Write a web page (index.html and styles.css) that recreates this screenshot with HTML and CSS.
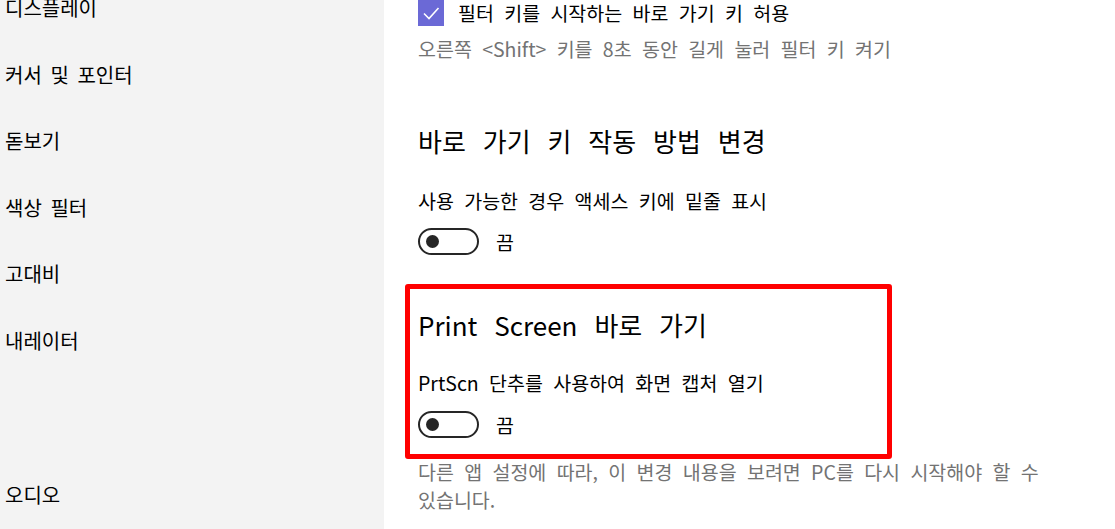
FILE: index.html
```html
<!DOCTYPE html>
<html lang="ko">
<head>
<meta charset="utf-8">
<link rel="stylesheet" href="styles.css">
</head>
<body>
<div class="app">
  <nav class="sidebar">
    <ul class="nav">
      <li class="nav-item">디스플레이</li>
      <li class="nav-item">커서 및 포인터</li>
      <li class="nav-item">돋보기</li>
      <li class="nav-item">색상 필터</li>
      <li class="nav-item">고대비</li>
      <li class="nav-item">내레이터</li>
      <li class="nav-spacer"></li>
      <li class="nav-item">오디오</li>
    </ul>
  </nav>
  <main class="content">
    <div class="check-row">
      <span class="checkbox">
        <svg viewBox="0 0 26 26" width="26" height="26"><path d="M6 13.5 L11 18.5 L20.5 8" fill="none" stroke="#fff" stroke-width="1.6"/></svg>
      </span>
      <span class="check-label">필터 키를 시작하는 바로 가기 키 허용</span>
    </div>
    <p class="desc desc-first">오른쪽 &lt;Shift&gt; 키를 8초 동안 길게 눌러 필터 키 켜기</p>

    <h2 class="heading heading-first">바로 가기 키 작동 방법 변경</h2>
    <p class="label">사용 가능한 경우 액세스 키에 밑줄 표시</p>
    <div class="toggle-row">
      <span class="toggle"><span class="knob"></span></span>
      <span class="toggle-text">끔</span>
    </div>

    <section class="highlight">
      <h2 class="heading heading-box">Print Screen 바로 가기</h2>
      <p class="label label-box">PrtScn 단추를 사용하여 화면 캡처 열기</p>
      <div class="toggle-row toggle-box">
        <span class="toggle"><span class="knob"></span></span>
        <span class="toggle-text">끔</span>
      </div>
    </section>
    <p class="desc desc-note">다른 앱 설정에 따라, 이 변경 내용을 보려면 PC를 다시 시작해야 할 수 있습니다.</p>
  </main>
</div>
</body>
</html>
```

FILE: styles.css
```css
* { box-sizing: border-box; }
html, body {
  margin: 0;
  padding: 0;
  background: #ffffff;
}
body {
  font-family: "Noto Sans CJK KR", "Noto Sans", sans-serif;
  color: #000;
  width: 1115px;
  height: 529px;
  overflow: hidden;
  word-break: keep-all;
}
.app {
  display: flex;
  height: 529px;
}
.sidebar {
  width: 384px;
  flex: 0 0 384px;
  background: #f3f3f3;
  overflow: hidden;
}
.nav {
  list-style: none;
  margin: -25px 0 0 0;
  padding: 0 0 0 5px;
}
.nav-item {
  height: 66.5px;
  line-height: 66.5px;
  font-size: 20px;
  word-spacing: 0.15em;
  color: #000;
}
.nav-spacer {
  height: 88px;
}
.content {
  flex: 1;
  padding-left: 34px;
}
.check-row {
  display: flex;
  align-items: center;
  gap: 14px;
  height: 26px;
}
.checkbox {
  width: 26px;
  height: 26px;
  background: #6b69d6;
  display: block;
}
.checkbox svg { display: block; }
.check-label {
  font-size: 19.5px;
  line-height: 24px;
  word-spacing: 0.25em;
}
.desc {
  margin: 0;
  font-size: 19.5px;
  line-height: 28px;
  color: #737373;
  word-spacing: 0.25em;
}
.desc-first { margin-top: 9px; }
.heading {
  margin: 0;
  font-weight: normal;
  font-size: 26px;
  line-height: 40px;
  word-spacing: 0.37em;
}
.heading-first { margin-top: 58px; }
.label {
  margin: 26px 0 0 0;
  font-size: 19.5px;
  line-height: 28px;
  word-spacing: 0.25em;
}
.toggle-row {
  display: flex;
  align-items: center;
  margin-top: 13px;
  height: 27px;
}
.toggle {
  width: 61px;
  height: 27px;
  border: 2.5px solid #262626;
  border-radius: 14px;
  display: flex;
  align-items: center;
  padding-left: 6px;
}
.knob {
  width: 13px;
  height: 13px;
  border-radius: 50%;
  background: #262626;
}
.toggle-text {
  margin-left: 17px;
  font-size: 19.5px;
}
.highlight {
  margin: 29px 0 0 -13px;
  width: 487px;
  border: 5px solid #ff0000;
  border-radius: 3px;
  padding: 16px 0 16px 8px;
}
.heading-box { margin-top: 0; }
.label-box { margin-top: 24px; }
.toggle-box { margin-top: 14px; }
.desc-note {
  margin-top: -1px;
  max-width: 650px;
}
```
